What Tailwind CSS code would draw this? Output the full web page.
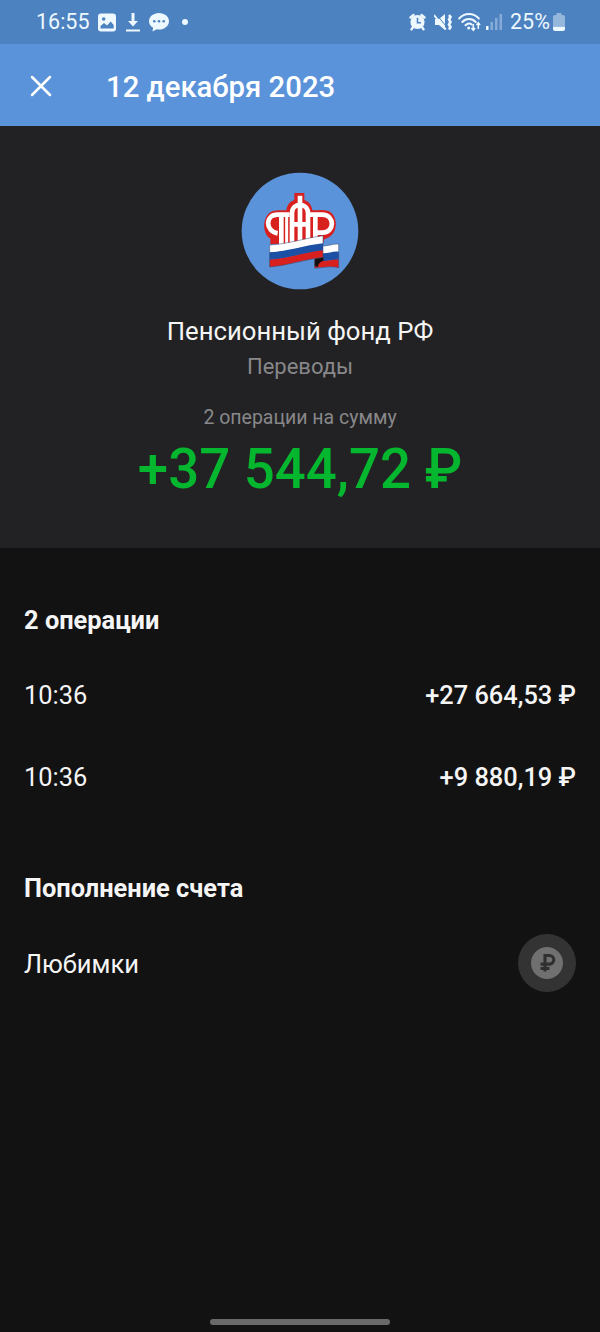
<!DOCTYPE html>
<html lang="ru">
<head>
  <meta charset="UTF-8" />
  <title>12 декабря 2023</title>
  <meta name="viewport" content="width=device-width, initial-scale=1" />
  <script src="https://cdn.jsdelivr.net/npm/@tailwindcss/browser@4"></script>
</head>
<body class="bg-[#121212] text-[#f5f5f5] font-[Roboto,sans-serif]">
  <div class="flex flex-col w-[600px] h-[1332px] overflow-hidden">

    <!-- Status bar -->
    <div class="h-11 shrink-0 bg-[#4d82c0] flex items-center justify-between pl-9 pr-[35px] text-[#eef8ff]">
      <div class="flex items-center">
        <span class="text-[21.5px] leading-none w-[54px] whitespace-nowrap">16:55</span>
        <svg class="ml-2 w-[18px] h-[19px]" viewBox="0 0 18 19">
          <rect y=".5" width="18" height="18" rx="3" fill="currentColor" />
          <circle cx="5.7" cy="6" r="1.8" fill="#4d82c0" />
          <path d="M2.5 15.5V13l3.5-3 3 2.6 3.7-4.1 3 3.5v3.5z" fill="#4d82c0" />
        </svg>
        <svg class="ml-[10px] w-[14px] h-[20px]" viewBox="0 0 14 20">
          <path d="M5.5 1h3v8H12l-5 5.5L2 9h3.5zM0 17.5h14v2H0z" fill="currentColor" />
        </svg>
        <svg class="ml-[9px] w-[20px] h-[20px]" viewBox="0 0 20 20">
          <path d="M10 1c5.5 0 10 3.6 10 8.2s-4.5 8.3-10 8.3c-.8 0-1.5 0-2.2-.2l-4.3 2.2.6-3.7C1.5 14.3 0 12 0 9.2 0 4.6 4.5 1 10 1z" fill="currentColor" />
          <circle cx="5.3" cy="9.3" r="1.3" fill="#4d82c0" />
          <circle cx="10" cy="9.3" r="1.3" fill="#4d82c0" />
          <circle cx="14.7" cy="9.3" r="1.3" fill="#4d82c0" />
        </svg>
        <span class="ml-[13px] size-[6px] rounded-full bg-[#eef8ff]"></span>
      </div>
      <div class="flex items-center">
        <svg class="w-[17px] h-[18px]" viewBox="0 0 17 18">
          <path d="M1.5 4.5l3-2.5M15.5 4.5l-3-2.5M4 14l-1.5 2.3M13 14l1.5 2.3" stroke="currentColor" stroke-width="2.4" stroke-linecap="round" />
          <circle cx="8.5" cy="9" r="7.1" fill="currentColor" />
          <path d="M8.5 4.8v5H12" fill="none" stroke="#4d82c0" stroke-width="1.6" />
        </svg>
        <svg class="ml-[8px] w-[18px] h-[20px]" viewBox="0 0 18 20">
          <path d="M1 7h4l6-5v16l-6-5H1z" fill="currentColor" />
          <path d="M2 2l10 12" stroke="#4d82c0" stroke-width="1" />
          <path d="M0 3l12 14.5" stroke="currentColor" stroke-width="1.8" />
          <path d="M15 3l1.5 2L15 7.5l1.5 2.5-1.5 2.5 1.5 2.5-1.5 2.500" fill="none" stroke="currentColor" stroke-width="2.6" />
        </svg>
        <svg class="ml-[6px] w-[24px] h-[20px]" viewBox="0 0 24 20">
          <g fill="none" stroke="currentColor" stroke-width="2" stroke-linecap="round">
            <path d="M1.2 6.5c5.3-6 14.3-6 19.6 0M4.3 10c3.7-4 9.7-4 13.4 0M7.5 13.3c2-2.1 4.5-2.2 6.300-.8" />
          </g>
          <circle cx="10.7" cy="16" r="1.5" fill="currentColor" />
          <path d="M15.3 12v6M13.5 16l1.8 2.2 1.8-2.2M20.3 17v-6M18.5 13l1.8-2.2 1.8 2.2" fill="none" stroke="currentColor" stroke-width="1.5" />
        </svg>
        <svg class="ml-[4px] w-[16px] h-[18px]" viewBox="0 0 16 18">
          <path d="M0 13h2.5v4H0z" fill="currentColor" />
          <path d="M4.5 9H7v8H4.5zM9 5h2.5v12H9zM13.5 1H16v16h-2.5z" fill="currentColor" opacity=".35" />
        </svg>
        <span class="ml-[8px] w-[43px] text-[21.5px] leading-none whitespace-nowrap">25%</span>
        <svg class="w-[12px] h-[18px]" viewBox="0 0 12 18">
          <path d="M3.5 0h5v2H10a2 2 0 0 1 2 2v9H0V4a2 2 0 0 1 2-2h1.5z" fill="currentColor" opacity=".45" />
          <path d="M0 13.5h12V16a2 2 0 0 1-2 2H2a2 2 0 0 1-2-2z" fill="currentColor" />
        </svg>
      </div>
    </div>

    <!-- App bar -->
    <header class="h-[82px] shrink-0 bg-[#5a93da] flex items-center pl-[30px] text-white">
      <svg class="mt-px size-[22px]" viewBox="0 0 22 22">
        <path d="M2 2l18 18M20 2 2 20" stroke="currentColor" stroke-width="2.5" stroke-linecap="round" />
      </svg>
      <h1 class="ml-[54px] pt-[5px] text-[29.3px] leading-none font-medium">12 декабря 2023</h1>
    </header>

    <!-- Summary -->
    <section class="h-[422px] shrink-0 bg-[#222224] flex flex-col items-center pt-[46px]">
      <svg class="size-[118px]" viewBox="18 20 354 354">
        <circle cx="195" cy="197" r="175" fill="#5a93da" />
        <path d="M106 236V220C80 204 82 150 112 138c14-5 28-3 42-3 2-16 10-26 24-31V83h30v21c14 5 22 15 24 31 18-1 38-3 50 3 26 12 28 62 2 76l-18 9v10z" fill="#d8201f" />
        <g fill="none" stroke="#fff" stroke-width="14">
          <path d="M128 204c-38-6-38-56 0-56h36M139 240v-92" />
          <path d="M171 240v-96c0-34 48-34 48 0v96M195 91v150M171 177h48" />
          <path d="M224 148h38c38 0 38 54 0 54h-16M241 150v85" />
        </g>
        <path d="M155 240v-90" stroke="#fff" stroke-width="9" />
        <!-- ribbon -->
        <path d="M264 242c18 0 30-7 47-6v24c-17-2-30 6-47 8z" fill="#fff" />
        <path d="M264 264c18 0 30-7 47-5v25c-17-2-30 3-47 5z" fill="#1c50a4" />
        <path d="M239 280l26-4v12c16-1 30-6 46-5v24c-20-5-45-1-72 1z" fill="#d8201f" />
        <path d="M239 280l26-5v12c-10 2-16 10-16 18l-10-3z" fill="#14100f" />
        <path d="M104 239c55-3 105-20 160-28v26c-55 5-105 23-160 25z" fill="#fff" />
        <path d="M104 261c55-3 105-21 160-27v23c-55 5-105 23-160 27z" fill="#1c50a4" />
        <path d="M104 283c55-3 105-22 160-28v21c-55 6-105 25-160 29z" fill="#d8201f" />
        <path d="M104 239c55-3 105-20 160-28v65c-55 6-105 25-160 29zM264 242c18 0 30-7 47-6v71c-25-6-50 1-72 2v-28" fill="none" stroke="#34466c" stroke-width="1.5" />
      </svg>
      <h2 class="mt-[26px] text-[25.7px] leading-[30px] whitespace-nowrap">Пенсионный фонд РФ</h2>
      <p class="mt-[8px] text-[22px] leading-[26px] text-[#88888a]">Переводы</p>
      <p class="mt-[26px] text-[19.5px] leading-[24px] text-[#88888a]">2 операции на сумму</p>
      <p class="mt-[7px] text-[54.6px] leading-[64px] font-medium text-[#05b72e] whitespace-nowrap">+37 544,72 ₽</p>
    </section>

    <!-- Operations -->
    <main class="flex-1 px-6">
      <h3 class="mt-[57px] text-[25.4px] leading-[30px] font-bold">2 операции</h3>
      <div class="mt-[45px] flex justify-between text-[25.4px] leading-[30px]">
        <span>10:36</span>
        <span class="font-medium">+27 664,53 ₽</span>
      </div>
      <div class="mt-[52px] flex justify-between text-[25.4px] leading-[30px]">
        <span>10:36</span>
        <span class="font-medium">+9 880,19 ₽</span>
      </div>

      <h3 class="mt-[81px] text-[25.4px] leading-[30px] font-bold">Пополнение счета</h3>
      <div class="mt-[31px] flex items-center justify-between">
        <span class="pt-[2px] text-[25.5px] leading-[30px]">Любимки</span>
        <svg class="size-[58px]" viewBox="0 0 58 58">
          <circle cx="29" cy="29" r="29" fill="#333333" />
          <circle cx="29" cy="29" r="16" fill="#707070" />
          <path d="M27 37.5V21.500h4.500a4.300 4.300 0 0 1 0 8.600H22.500M22.500 34.500h9" fill="none" stroke="#303030" stroke-width="3.100" />
        </svg>
      </div>
    </main>

    <!-- Gesture handle -->
    <div class="mx-auto mb-[7px] w-[180px] h-[6px] rounded-full bg-[#6a6a6a]"></div>
  </div>
</body>
</html>
